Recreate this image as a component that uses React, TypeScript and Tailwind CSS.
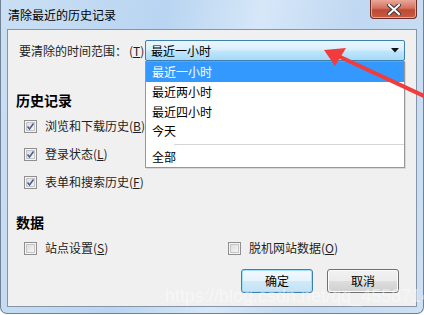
import React from "react"

const cjk = { fontFamily: '"Noto Sans CJK SC", "Noto Sans", sans-serif' }

function CheckBox({ checked }: { checked?: boolean }) {
    return (
        <svg width="13" height="13" viewBox="0 0 13 13" className="shrink-0">
            <defs>
                <linearGradient id="cbg" x1="0" y1="0" x2="1" y2="1">
                    <stop offset="0" stopColor="#dcdcdc" />
                    <stop offset="1" stopColor="#f6f6f6" />
                </linearGradient>
            </defs>
            <rect x="0.5" y="0.5" width="12" height="12" fill="#f4f4f4" stroke="#8f8f8f" />
            <rect x="2.5" y="2.5" width="8" height="8" fill="url(#cbg)" stroke="#c6c6c6" />
            {checked && <path d="M3.5 6.5 L5.5 9 L9.5 3.5" fill="none" stroke="#4b5f96" strokeWidth="1.6" />}
        </svg>
    )
}

function Check({ label, k, checked }: { label: string; k: string; checked?: boolean }) {
    return (
        <div className="flex items-center h-[28px] gap-[8px]">
            <CheckBox checked={checked} />
            <span className="text-[12px] text-[#1e1e1e] leading-none">
                {label}(<span className="underline">{k}</span>)
            </span>
        </div>
    )
}

function WinButton({ label, focused }: { label: string; focused?: boolean }) {
    return (
        <div
            className={
                "w-[72px] h-[24px] rounded-[3px] border flex items-center justify-center text-[12px] text-black " +
                (focused
                    ? "border-[#3c7fb1] shadow-[inset_0_0_0_1px_#9fe0fb] bg-[linear-gradient(#f2f9fd_0%,#e6f3fb_50%,#d0e9f8_51%,#c4e2f5_100%)]"
                    : "border-[#707070] shadow-[inset_0_0_0_1px_#fcfcfc] bg-[linear-gradient(#f2f2f2_0%,#ebebeb_50%,#dddddd_51%,#cfcfcf_100%)]")
            }
        >
            {label}
        </div>
    )
}

export default function App() {
    const items = ["最近一小时", "最近两小时", "最近四小时", "今天"]

    return (
        <div
            style={cjk}
            className="relative w-[424px] h-[315px] overflow-hidden bg-white"
        >
            {/* window frame */}
            <div className="w-[424px] h-[314px] flex flex-col rounded-b-[7px] border border-t-0 border-[#6f8296] bg-[linear-gradient(100deg,#cadff4_0%,#b9d5f1_35%,#d6e7f8_55%,#c0d8f1_75%,#cde0f4_100%)]">
                {/* title bar */}
                <div className="h-[29px] flex justify-between pl-[7px] pr-[6px]">
                    <span className="text-[12px] text-black leading-none mt-[9px]">清除最近的历史记录</span>
                    <div className="w-[47px] h-[19px] rounded-b-[4px] border border-t-0 border-[#6b2e2a] bg-[linear-gradient(#e9a899_0%,#d4715f_45%,#c04a34_55%,#c65b42_100%)] flex items-center justify-center shadow-[inset_0_0_0_1px_#eba393]">
                        <svg width="14" height="11" viewBox="0 0 14 11">
                            <path d="M2 1 L12 10 M12 1 L2 10" stroke="#3a3a3a" strokeWidth="4" strokeLinecap="square" />
                            <path d="M2 1 L12 10 M12 1 L2 10" stroke="#ffffff" strokeWidth="2" strokeLinecap="square" />
                        </svg>
                    </div>
                </div>

                {/* client area */}
                <div className="relative ml-[6px] w-[410px] h-[278px] border border-[#8794a6] bg-[#f0f0f0] flex flex-col">
                    <div className="flex items-center mt-[10px] h-[21px]">
                        <div className="w-[137px] pl-[11px] text-[12px] text-[#1e1e1e] whitespace-nowrap">
                            要清除的时间范围：<span className="ml-[2px]">(<span className="underline">T</span>)</span>
                        </div>
                        <div className="w-[260px] h-[21px] rounded-[2px] border border-[#3c7fb1] bg-[linear-gradient(#eaf6fd_0%,#d9f0fc_45%,#bee6fd_55%,#a7d9f5_100%)] flex items-center justify-between pl-[5px] pr-[5px]">
                            <span className="text-[12px] text-black">最近一小时</span>
                            <svg width="8" height="5" viewBox="0 0 8 5">
                                <path d="M0 0 H8 L4 4.5 Z" fill="#111" />
                            </svg>
                        </div>
                    </div>

                    <div className="mt-[29px] pl-[8px] h-[20px] flex items-center text-[14px] font-bold text-black">历史记录</div>

                    <div className="mt-[2px] pl-[16px] flex flex-col">
                        <Check label="浏览和下载历史" k="B" checked />
                        <Check label="登录状态" k="L" checked />
                        <Check label="表单和搜索历史" k="F" checked />
                    </div>

                    <div className="mt-[16px] pl-[8px] h-[20px] flex items-center text-[14px] font-bold text-black">数据</div>

                    <div className="mt-[2px] pl-[16px] flex">
                        <div className="w-[204px]">
                            <Check label="站点设置" k="S" />
                        </div>
                        <Check label="脱机网站数据" k="O" />
                    </div>

                    <div className="mt-[7px] pr-[17px] flex justify-end gap-[14px]">
                        <WinButton label="确定" focused />
                        <WinButton label="取消" />
                    </div>

                    {/* open dropdown list */}
                    <div className="absolute left-[137px] top-[31px] w-[260px] h-[107px] border border-[#979797] bg-white flex flex-col shadow-[1px_1px_0_#d8d8d8]">
                        {items.map((it, i) => (
                            <div
                                key={it}
                                className={
                                    "h-[20px] flex items-center pl-[6px] text-[12px] " +
                                    (i === 0 ? "bg-[#3399ff] text-white" : "text-black")
                                }
                            >
                                {it}
                            </div>
                        ))}
                        <div className="h-[6px] flex items-center pl-[28px]">
                            <div className="h-px w-full bg-[#d6d6d6]" />
                        </div>
                        <div className="h-[20px] flex items-center pl-[6px] text-[12px] text-black">全部</div>
                    </div>
                </div>
            </div>

            {/* watermark */}
            <div
                className="absolute left-[165px] top-[287px] text-[18px] text-white/45 leading-none"
                style={{ fontFamily: '"Liberation Sans", Arial, sans-serif' }}
            >
                https://blog.csdn.net/qq_45587146
            </div>

            {/* red annotation arrow */}
            <svg className="absolute left-0 top-0" width="424" height="315" viewBox="0 0 424 315">
                <path d="M336 55 L426 97" stroke="#f03c3c" strokeWidth="4" />
                <path d="M324 50 L346 48 L335 66 Z" fill="#f03c3c" />
            </svg>
        </div>
    )
}
